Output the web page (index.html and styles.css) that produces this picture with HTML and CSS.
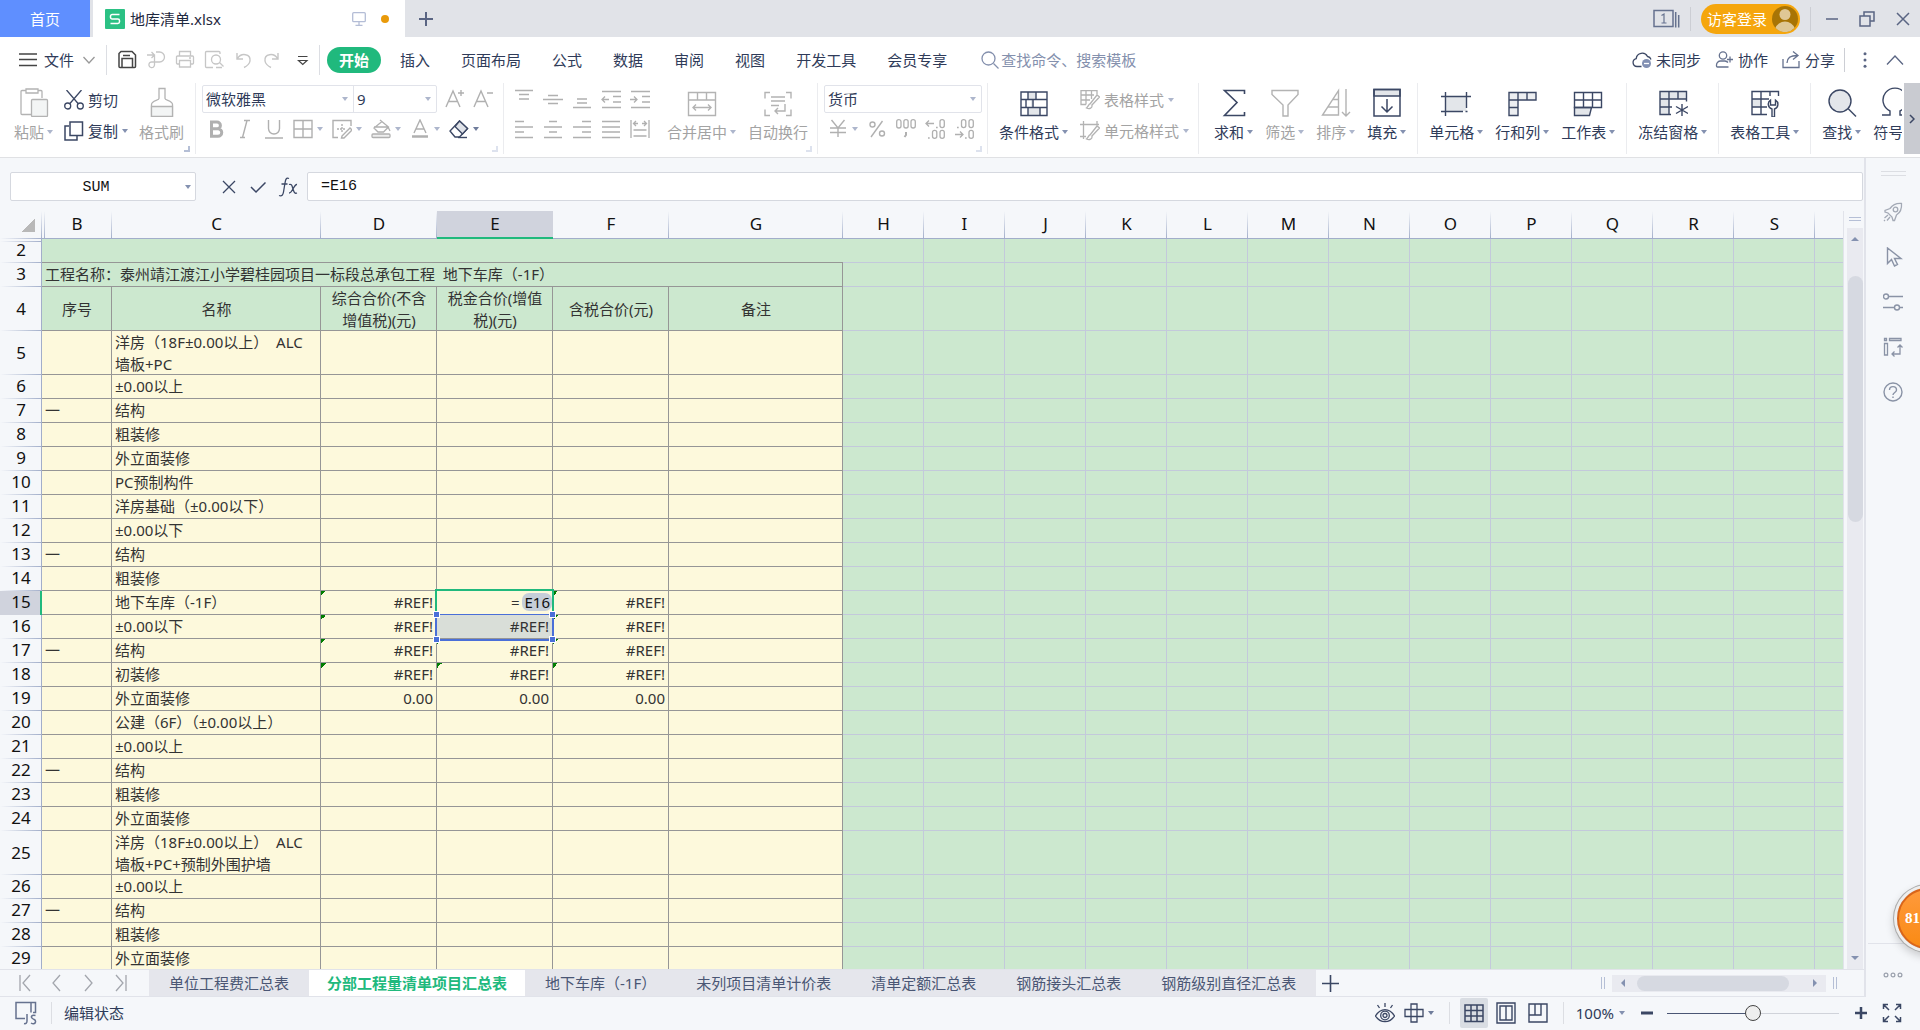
FILE: index.html
```html
<!DOCTYPE html>
<html lang="zh-CN">
<head>
<meta charset="utf-8">
<title>地库清单.xlsx</title>
<link rel="stylesheet" href="styles.css">
</head>
<body>
<header class="titlebar">
  <button class="home-tab">首页</button>
  <div class="doc-tab">
    <svg class="doc-logo" width="20" height="20" viewBox="0 0 20 20"><rect width="20" height="20" rx="1" fill="#2bc184"/><path d="M14.5 5.5H7.2a1.7 1.7 0 0 0-1.7 1.7v1.1A1.7 1.7 0 0 0 7.200 10h5.600a1.700 1.700 0 0 1 1.700 1.700v1.100a1.700 1.700 0 0 1-1.700 1.700H5.500" fill="none" stroke="#fff" stroke-width="1.500"/></svg>
    <span class="doc-name">地库清单.xlsx</span>
    <svg width="14" height="14" viewBox="0 0 14 14" fill="none" stroke="#b4bdd6" stroke-width="1.300"><rect x=".7" y=".7" width="12.600" height="9" rx="1"/><path d="M7 9.500v4M3.500 13.300h7"/></svg>
    <span class="unsaved"></span>
  </div>
  <button class="icon-btn new-tab" aria-label="新建"><svg width="16" height="16" viewBox="0 0 16 16" stroke="#5a6583" stroke-width="2"><path d="M8 1v14M1 8h14"/></svg></button>
  <div class="window-tools">
    <button class="icon-btn" aria-label="窗口"><svg width="27" height="20" viewBox="0 0 27 20" fill="none" stroke="#66728f" stroke-width="1.500"><rect x="1" y="1.500" width="19" height="16"/><path d="M8.500 6.500l2.500-1.500v9M8.500 14h5" stroke-width="1.200"/><path d="M22.700 3v15.500M25.700 6v12.500"/></svg></button>
    <i class="rule"></i>
    <button class="login">访客登录<svg width="26" height="26" viewBox="0 0 26 26"><circle cx="13" cy="13" r="13" fill="#a87405"/><circle cx="13" cy="8.500" r="5.500" fill="#dfc795"/><path d="M3.500 22a9.800 8.500 0 0 1 19 0A13 13 0 0 1 3.500 22z" fill="#dfc795"/></svg></button>
    <i class="rule"></i>
    <button class="icon-btn min" aria-label="最小化"><svg width="14" height="14" viewBox="0 0 14 14"><path d="M1 7h12" stroke="#5a6583" stroke-width="1.500"/></svg></button>
    <button class="icon-btn restore" aria-label="还原"><svg width="16" height="16" viewBox="0 0 16 16" fill="none" stroke="#5a6583" stroke-width="1.500"><rect x="1" y="5" width="10" height="10"/><path d="M5 5V1h10v9h-4"/></svg></button>
    <button class="icon-btn close" aria-label="关闭"><svg width="14" height="14" viewBox="0 0 14 14" stroke="#5a6583" stroke-width="1.500"><path d="M1 1l12 12M13 1L1 13"/></svg></button>
  </div>
</header>

<nav class="menubar">
  <button class="file-btn"><svg width="18" height="14" viewBox="0 0 18 14" stroke="#444" stroke-width="1.500"><path d="M0 1h18M0 6.500h18M0 12.500h18"/></svg><span>文件</span><svg width="12" height="8" viewBox="0 0 12 8" fill="none" stroke="#999" stroke-width="1.300"><path d="M.5 1L6 7l5.500-6"/></svg></button>
  <i class="rule tall"></i>
  <div class="quick">
    <button class="icon-btn" aria-label="保存"><svg width="20" height="20" viewBox="0 0 20 20" fill="none" stroke="#444" stroke-width="1.500"><path d="M2 16.500V3.500L4 1.500h11L18.500 5v11.500a1 1 0 0 1-1 1H3a1 1 0 0 1-1-1zM5 17V8.500h10.500V17M6 5.500h7"/></svg></button>
    <button class="icon-btn" aria-label="输出"><svg width="20" height="20" viewBox="0 0 20 20" fill="none" stroke="#c6c6c6" stroke-width="1.300"><path d="M1 5h7M5.500 2l3 3-3 3M10 2h3.500a5 5 0 0 1 0 10H6a2.800 2.800 0 1 0 2.500 3V5"/></svg></button>
    <button class="icon-btn" aria-label="打印"><svg width="20" height="20" viewBox="0 0 20 20" fill="none" stroke="#c6c6c6" stroke-width="1.300"><path d="M4.500 6V1.500h11V6M4.500 14H2.500a1 1 0 0 1-1-1V7a1 1 0 0 1 1-1h15a1 1 0 0 1 1 1v6a1 1 0 0 1-1 1h-2M4.500 10.500h11v6.500h-11zM14 8h2"/></svg></button>
    <button class="icon-btn" aria-label="打印预览"><svg width="20" height="20" viewBox="0 0 20 20" fill="none" stroke="#c6c6c6" stroke-width="1.300"><path d="M9 17.500H2.500a1 1 0 0 1-1-1v-14a1 1 0 0 1 1-1H15a1 1 0 0 1 1 1V4"/><circle cx="12" cy="9.500" r="4.500"/><path d="M15.500 12.500l4 4M12 17.500h6"/></svg></button>
    <button class="icon-btn" aria-label="撤销"><svg width="20" height="20" viewBox="0 0 20 20" fill="none" stroke="#c6c6c6" stroke-width="1.400"><path d="M4 3v6h6M4.500 8.500C8 2.500 18 3.500 17 11c-.5 3-3 5-6 6.500"/></svg></button>
    <button class="icon-btn" aria-label="恢复"><svg width="20" height="20" viewBox="0 0 20 20" fill="none" stroke="#c6c6c6" stroke-width="1.400"><path d="M16 3v6h-6M15.500 8.500C12 2.500 2 3.500 3 11c.5 3 3 5 6 6.500"/></svg></button>
    <button class="icon-btn more" aria-label="更多"><svg width="20" height="20" viewBox="0 0 20 20" fill="none" stroke="#444" stroke-width="1.200"><path d="M5 6.500h9.500M5.500 10.500h8.500l-4.250 4z"/></svg></button>
  </div>
  <i class="rule tall"></i>
  <div class="menu-tabs">
    <button class="active">开始</button><button>插入</button><button>页面布局</button><button>公式</button><button>数据</button><button>审阅</button><button>视图</button><button>开发工具</button><button>会员专享</button>
  </div>
  <label class="search"><svg width="18" height="18" viewBox="0 0 18 18" fill="none" stroke="#8490ad" stroke-width="1.300"><circle cx="7.500" cy="7.500" r="6.500"/><path d="M12.500 12.500l5 5"/></svg><input type="text" placeholder="查找命令、搜索模板" aria-label="搜索"></label>
  <div class="menu-right">
    <button><svg width="20" height="20" viewBox="0 0 20 20" fill="none" stroke="#3b4764" stroke-width="1.300"><path d="M9.500 16.500H5a4 4 0 0 1-.8-7.900A6 6 0 0 1 15.500 6.500 4.500 4.500 0 0 1 19 9.500"/><circle cx="14.500" cy="13.500" r="4.500" fill="#8290b3" stroke="none"/><path d="M12 13.500h5" stroke="#fff"/></svg>未同步</button>
    <button><svg width="20" height="20" viewBox="0 0 20 20" fill="none" stroke="#66728f" stroke-width="1.300"><circle cx="9" cy="5.500" r="3.700"/><path d="M14 12.500a5 4 0 0 0-3-1.500H6.500a4 4 0 0 0-4 4v1a1 1 0 0 0 1 1h11M13 9.500h6M16 6.500v6"/></svg>协作</button>
    <button><svg width="20" height="20" viewBox="0 0 20 20" fill="none" stroke="#66728f" stroke-width="1.300"><path d="M2 9v8.500h16V11M6 13c0-5 3-7.500 10.500-7.500M12 1.500l5 4-5 4"/></svg>分享</button>
    <i class="rule"></i>
    <button class="icon-btn dots" aria-label="更多"><svg width="4" height="16" viewBox="0 0 4 16" fill="#5a6583"><circle cx="2" cy="1.700" r="1.500"/><circle cx="2" cy="8" r="1.500"/><circle cx="2" cy="14.300" r="1.500"/></svg></button>
    <button class="icon-btn" aria-label="收起功能区"><svg width="18" height="10" viewBox="0 0 18 10" fill="none" stroke="#5a6583" stroke-width="1.300"><path d="M1 9.500L9 1l8 8.500"/></svg></button>
  </div>
</nav>

<section class="ribbon">
  <div class="group g-clip">
    <button class="big off"><svg width="30" height="30" viewBox="0 0 30 30" fill="none" stroke="#b3b3b3" stroke-width="1.300"><path d="M12 27.500H3a1 1 0 0 1-1-1v-22a1 1 0 0 1 1-1h4M19 3.500h3a1 1 0 0 1 1 1V11M7 2h12v4H7z"/><rect x="12.500" y="12.500" width="16" height="17" rx="1" fill="#f3f5f5"/></svg><span>粘贴<b class="caret"></b></span></button>
    <div class="stack">
      <button class="small"><svg width="20" height="20" viewBox="0 0 20 20" fill="none" stroke="#3b4764" stroke-width="1.300"><path d="M2.500 0l12 14M17.500 0l-12 14"/><circle cx="3.700" cy="16" r="3"/><circle cx="16.300" cy="16" r="3"/></svg>剪切</button>
      <button class="small"><svg width="20" height="20" viewBox="0 0 20 20" fill="none" stroke="#3b4764" stroke-width="1.500"><path d="M5 5H1v14h12v-4"/><rect x="6" y="1" width="12.500" height="13.500"/></svg>复制<b class="caret"></b></button>
    </div>
    <button class="big off"><svg width="30" height="30" viewBox="0 0 30 30" fill="none" stroke="#b3b3b3" stroke-width="1.300"><path d="M12 1.500h6v10c0 2 7.500 2 7.500 6v12h-21v-12c0-4 7.500-4 7.500-6z"/><path d="M4.500 19.500h21v10h-21z" fill="#f3f5f5"/></svg><span>格式刷</span></button>
    <i class="corner dark"></i>
  </div>

  <div class="group g-font">
    <div class="rows">
      <div class="row">
        <div class="combo pair"><span class="sel font-name"><select aria-label="字体"><option>微软雅黑</option></select><b class="caret"></b></span><span class="sel font-size"><select aria-label="字号"><option>9</option></select><b class="caret"></b></span></div>
        <button class="icon-btn" aria-label="增大字号"><svg width="20" height="20" viewBox="0 0 20 20" fill="none" stroke="#b0b0b0" stroke-width="1.400"><path d="M1 18L8 2l7 16M3.500 12.500h9M13 4h6M16 1v6"/></svg></button>
        <button class="icon-btn" aria-label="减小字号"><svg width="20" height="20" viewBox="0 0 20 20" fill="none" stroke="#b0b0b0" stroke-width="1.400"><path d="M1 18L8 2l7 16M3.500 12.500h9M14 4h6"/></svg></button>
      </div>
      <div class="row tools">
        <button class="icon-btn" aria-label="加粗"><svg width="20" height="20" viewBox="0 0 20 20" fill="none" stroke="#b0b0b0" stroke-width="3"><path d="M5.500 3H11a3.300 3.300 0 0 1 0 6.800H5.500zM5.500 9.800H12a3.700 3.700 0 0 1 0 7.500H5.500z"/></svg></button>
        <button class="icon-btn" aria-label="倾斜"><svg width="20" height="20" viewBox="0 0 20 20" fill="none" stroke="#b0b0b0" stroke-width="1.400"><path d="M9 1.500h6M5 18.500h5M12 1.500l-4.500 17"/></svg></button>
        <button class="icon-btn" aria-label="下划线"><svg width="20" height="20" viewBox="0 0 20 20" fill="none" stroke="#b0b0b0" stroke-width="1.400"><path d="M4.500 1v8.500a5.500 5.500 0 0 0 11 0V1M1 19h18"/></svg></button>
        <button class="icon-btn drop" aria-label="边框"><svg width="20" height="20" viewBox="0 0 20 20" fill="none" stroke="#b0b0b0" stroke-width="1.400"><path d="M1 1.500h18v17H1zM10 1.500v17M1 10h18"/></svg><b class="caret"></b></button>
        <button class="icon-btn drop" aria-label="绘制边框"><svg width="20" height="20" viewBox="0 0 20 20" fill="none" stroke="#b0b0b0" stroke-width="1.400"><path d="M6 18.500H1v-17h18V7M10 17l8-8 2 2-8 8H9.500z"/><path d="M5 10h9M10 5v8" stroke-dasharray="2 1"/></svg><b class="caret"></b></button>
        <button class="icon-btn drop" aria-label="填充颜色"><svg width="20" height="20" viewBox="0 0 20 20" fill="none" stroke="#b0b0b0" stroke-width="1.300"><path d="M9 1l8.500 7-5 5H7L3 9l8-6.500M3 8h14l2 4"/><rect x="1" y="15" width="18" height="3.500" rx="1" fill="#eee"/></svg><b class="caret"></b></button>
        <button class="icon-btn drop" aria-label="字体颜色"><svg width="20" height="20" viewBox="0 0 20 20" fill="none" stroke="#b0b0b0" stroke-width="1.400"><path d="M4 14L10 1l6 13M6 10h8"/><path d="M2 17.500h16" stroke-width="2.500"/></svg><b class="caret"></b></button>
        <button class="icon-btn drop strong" aria-label="清除"><svg width="20" height="20" viewBox="0 0 20 20" fill="none" stroke="#3b4764" stroke-width="1.400"><path d="M10.500 2l8 7.500-8 8.500H6L1 12z"/><path d="M10.500 2l8 7.500-5 5.500-7.500-7.500z" fill="#dfe2e8"/><path d="M9 18.500h9"/></svg><b class="caret"></b></button>
      </div>
    </div>
    <i class="corner"></i>
  </div>

  <div class="group g-align">
    <div class="rows">
      <div class="row tools">
        <button class="icon-btn" aria-label="顶端对齐"><svg width="20" height="20" viewBox="0 0 20 20" stroke="#b0b0b0" stroke-width="1.300"><path d="M1 1.500h18M5 5.500h10M5 10h10"/></svg></button>
        <button class="icon-btn" aria-label="垂直居中"><svg width="20" height="20" viewBox="0 0 20 20" stroke="#b0b0b0" stroke-width="1.300"><path d="M5 6.500h10M0 10.500h20M5 14.500h10"/></svg></button>
        <button class="icon-btn" aria-label="底端对齐"><svg width="20" height="20" viewBox="0 0 20 20" stroke="#b0b0b0" stroke-width="1.300"><path d="M5 10h10M5 14h10M1 18.500h18"/></svg></button>
        <button class="icon-btn" aria-label="减少缩进"><svg width="20" height="20" viewBox="0 0 20 20" fill="none" stroke="#b0b0b0" stroke-width="1.300"><path d="M1 2.500h19M12 7.500h8M12 13h8M1 18.500h19M1 10.500h7M4 7.500l-3 3 3 3"/></svg></button>
        <button class="icon-btn" aria-label="增加缩进"><svg width="20" height="20" viewBox="0 0 20 20" fill="none" stroke="#b0b0b0" stroke-width="1.300"><path d="M1 2.500h19M12 7.500h8M12 13h8M1 18.500h19M0 10.500h7M4 7.500l3 3-3 3"/></svg></button>
      </div>
      <div class="row tools">
        <button class="icon-btn" aria-label="左对齐"><svg width="20" height="20" viewBox="0 0 20 20" stroke="#b0b0b0" stroke-width="1.300"><path d="M1 2.500h9M1 8h18M1 13h9M1 18.500h18"/></svg></button>
        <button class="icon-btn" aria-label="水平居中"><svg width="20" height="20" viewBox="0 0 20 20" stroke="#b0b0b0" stroke-width="1.300"><path d="M6 2.500h8M1 8h18M6 13h8M1 18.500h18"/></svg></button>
        <button class="icon-btn" aria-label="右对齐"><svg width="20" height="20" viewBox="0 0 20 20" stroke="#b0b0b0" stroke-width="1.300"><path d="M10 2.500h9M1 8h18M10 13h9M1 18.500h18"/></svg></button>
        <button class="icon-btn" aria-label="两端对齐"><svg width="20" height="20" viewBox="0 0 20 20" stroke="#b0b0b0" stroke-width="1.300"><path d="M1 2.500h18M1 8h18M1 13h18M1 18.500h18"/></svg></button>
        <button class="icon-btn" aria-label="分散对齐"><svg width="20" height="20" viewBox="0 0 20 20" fill="none" stroke="#b0b0b0" stroke-width="1.300"><path d="M1 1v18M19 1v18M4 4.500h4M12 4.500h4M6 2L3.500 4.500 6 7M14 2l2.500 2.500L14 7M3.500 11h13M3.500 17h13"/></svg></button>
      </div>
    </div>
    <button class="big off merge"><svg width="30" height="30" viewBox="0 0 30 30" fill="none" stroke="#b3b3b3" stroke-width="1.400"><path d="M1.500 5.500h27v23h-27zM1.500 13h27M10.500 5.500V13M19.500 5.500V13M6 20.500h18M9 17.500l-3 3 3 3M21 17.500l3 3-3 3"/></svg><span>合并居中<b class="caret"></b></span></button>
    <button class="big off"><svg width="30" height="30" viewBox="0 0 30 30" fill="none" stroke="#b3b3b3" stroke-width="1.400"><path d="M7 5.500H2v6M23 5.500h5v6M7 28.500H2v-6M23 28.500h5v-6M8 10h14M8 14h14M8 18.500h8M22 17v7H12M15 21l-3 3 3 3"/></svg><span>自动换行</span></button>
    <i class="corner"></i>
  </div>

  <div class="group g-num">
    <div class="rows">
      <div class="row"><div class="combo"><span class="sel num-format"><select aria-label="数字格式"><option>货币</option></select><b class="caret"></b></span></div></div>
      <div class="row tools">
        <button class="icon-btn drop" aria-label="货币"><svg width="20" height="20" viewBox="0 0 20 20" fill="none" stroke="#b0b0b0" stroke-width="1.400"><path d="M3.500 1l6.500 8 6.500-8M10 9v9M2 9h16M2 13.500h16"/></svg><b class="caret"></b></button>
        <button class="icon-btn" aria-label="百分比"><svg width="20" height="20" viewBox="0 0 20 20" fill="none" stroke="#b0b0b0" stroke-width="1.400"><circle cx="5.500" cy="5.500" r="2.500"/><circle cx="15" cy="14.500" r="2.500"/><path d="M15.500 2L4 18"/></svg></button>
        <button class="icon-btn" aria-label="千位分隔"><svg width="20" height="20" viewBox="0 0 20 20" fill="none" stroke="#b0b0b0" stroke-width="1.300"><rect x=".7" y=".7" width="4.300" height="8.300" rx="2.100"/><rect x="7.850" y=".7" width="4.300" height="8.300" rx="2.100"/><rect x="15" y=".7" width="4.300" height="8.300" rx="2.100"/><path d="M10 13v3l-1.500 2" stroke-width="2"/></svg></button>
        <button class="icon-btn" aria-label="增加小数位"><svg width="20" height="20" viewBox="0 0 20 20" fill="none" stroke="#b0b0b0" stroke-width="1.300"><path d="M1 4.500h8M4 1.500l-3 3 3 3M11 8.500h1.700M3 19h1.700"/><rect x="15" y=".7" width="4.300" height="8" rx="2.100"/><rect x="7.500" y="11.300" width="4.300" height="8" rx="2.100"/><rect x="15" y="11.300" width="4.300" height="8" rx="2.100"/></svg></button>
        <button class="icon-btn" aria-label="减少小数位"><svg width="20" height="20" viewBox="0 0 20 20" fill="none" stroke="#b0b0b0" stroke-width="1.300"><path d="M1 15.500h8M6 12.500l3 3-3 3M11 19h1.700M3 8.500h1.700"/><rect x="15" y=".7" width="4.300" height="8" rx="2.100"/><rect x="7.500" y=".7" width="4.300" height="8" rx="2.100"/><rect x="15" y="11.300" width="4.300" height="8" rx="2.100"/></svg></button>
      </div>
    </div>
    <i class="corner"></i>
  </div>

  <div class="group g-style">
    <button class="big"><svg width="30" height="30" viewBox="0 0 30 30" fill="none" stroke="#3b4764" stroke-width="1.400"><path d="M9 5h8v8H9zM12 13h3v8h-3zM9 21h12v7H9z" fill="#e3e6ea" stroke="none"/><path d="M2 5h26v23.500H2zM2 12.500h26M2 20.500h26M9 5v7.500M17 5v7.500M7 12.500v8M14 12.500v8M9 20.500v8M21 20.500v8"/></svg><span>条件格式<b class="caret"></b></span></button>
    <div class="stack">
      <button class="small off"><svg width="20" height="20" viewBox="0 0 20 20" fill="none" stroke="#b3b3b3" stroke-width="1.300"><path d="M6 14.500H1v-14h16V5M1 5h13M1 10h9M6 .5v14M11.500.5V9M10 14l7-9 2.500 2-8 8.500M10.500 13.500c-2 .5-2 3-4 4.500 3 1.500 6 0 5.500-3"/></svg>表格样式<b class="caret"></b></button>
      <button class="small off"><svg width="20" height="20" viewBox="0 0 20 20" fill="none" stroke="#b3b3b3" stroke-width="1.300"><path d="M0 3.500h19M3.500 0v18M17 0v4M0 15.500h6M10 14l7-9 2.500 2-8 8.500M10.500 13.500c-2 .5-2 3-4 4.500 3 1.500 6 0 5.500-3"/></svg>单元格样式<b class="caret"></b></button>
    </div>
  </div>

  <div class="group g-edit">
    <button class="big"><svg width="30" height="30" viewBox="0 0 30 30" fill="none" stroke="#3b4764" stroke-width="1.600"><path d="M25.500 7V3.500h-20L18 15.500 5.500 28.500h20V25"/></svg><span>求和<b class="caret"></b></span></button>
    <button class="big off"><svg width="30" height="30" viewBox="0 0 30 30" fill="none" stroke="#b3b3b3" stroke-width="1.400"><path d="M2 3.500h26v4L18 18v11h-5V18L2 7.500z"/></svg><span>筛选<b class="caret"></b></span></button>
    <button class="big off"><svg width="30" height="30" viewBox="0 0 30 30" fill="none" stroke="#b3b3b3" stroke-width="1.400"><path d="M17.500 28V3.500L1.500 28zM12 12.500h5.500M7 20h10.500M25 2v27M21 25l4 4 4-4"/></svg><span>排序<b class="caret"></b></span></button>
    <button class="big"><svg width="30" height="30" viewBox="0 0 30 30" fill="none" stroke="#3b4764" stroke-width="1.500"><path d="M2 2.500h26V9H2z" fill="#e3e6ea"/><path d="M2 2.500h26v26.500H2zM15 12v13M9.500 19.500L15 25l5.500-5.500"/></svg><span>填充<b class="caret"></b></span></button>
  </div>

  <div class="group g-cell">
    <button class="big"><svg width="30" height="30" viewBox="0 0 30 30" fill="none" stroke="#3b4764" stroke-width="1.400"><path d="M4.500 9.500h21V24h-21z" fill="#e3e6ea" stroke="none"/><path d="M0 9.500h30M4.500 5v24M25.500 5v16M0 24.500h22M24.500 24.500h2"/></svg><span>单元格<b class="caret"></b></span></button>
    <button class="big"><svg width="30" height="30" viewBox="0 0 30 30" fill="none" stroke="#3b4764" stroke-width="1.400"><path d="M2 5.500h27V13H11v15.500H2z" fill="#eceef1"/><path d="M11 5.500V13H2M20 5.500V13M2 20.500h9"/></svg><span>行和列<b class="caret"></b></span></button>
    <button class="big"><svg width="30" height="30" viewBox="0 0 30 30" fill="none" stroke="#3b4764" stroke-width="1.400"><path d="M1.500 20.500h17l-2 8h-15z" fill="#e3e6ea"/><path d="M1.500 5.500h27v15h-27zM1.500 13h27M10.500 5.500v15M19.500 5.500v15"/></svg><span>工作表<b class="caret"></b></span></button>
  </div>

  <div class="group g-one">
    <button class="big"><svg width="30" height="30" viewBox="0 0 30 30" fill="none" stroke="#3b4764" stroke-width="1.400"><path d="M2 4.500h26.500V12H11v15.500H2z" fill="#e3e6ea" stroke="none"/><path d="M13 27.500H2v-23h26.500v10M2 12h26.500M2 20h12M11 4.500v23M20 4.500V12M24 17v12M18 19.500l12 7M30 19.500l-12 7"/></svg><span>冻结窗格<b class="caret"></b></span></button>
  </div>
  <div class="group g-one">
    <button class="big"><svg width="30" height="30" viewBox="0 0 30 30" fill="none" stroke="#3b4764" stroke-width="1.400"><path d="M2 12h9v8H2z" fill="#e3e6ea" stroke="none"/><path d="M17 27.500H2v-23h26.500V9M2 12h17M2 20h15M11 4.500v23M20 4.500V9M22 30v-8a5 5 0 0 1-1.500-9v5h5v-5a5 5 0 0 1-1 9v8z"/></svg><span>表格工具<b class="caret"></b></span></button>
  </div>
  <div class="group g-find">
    <button class="big"><svg width="30" height="30" viewBox="0 0 30 30" fill="none" stroke="#3b4764" stroke-width="1.400"><circle cx="13" cy="14" r="11" fill="#e3e6ea"/><path d="M21 21.500l8 8"/></svg><span>查找<b class="caret"></b></span></button>
    <button class="big"><svg width="30" height="30" viewBox="0 0 30 30" fill="none" stroke="#3b4764" stroke-width="1.400"><path d="M4 28h8v-4A12 12 0 1 1 22 24v4h8"/></svg><span>符号<b class="caret"></b></span></button>
  </div>
  <button class="ribbon-more" aria-label="更多功能"><svg width="6" height="10" viewBox="0 0 6 10" fill="none" stroke="#3b4764" stroke-width="1.500"><path d="M1 1l4 4-4 4"/></svg></button>
</section>

<div class="workspace">
  <main class="book">
    <div class="formula-bar">
      <span class="sel name-box"><input type="text" value="SUM" aria-label="名称框"><b class="caret"></b></span>
      <div class="formula-tools">
        <button class="icon-btn" aria-label="取消"><svg width="16" height="16" viewBox="0 0 16 16" stroke="#3b4764" stroke-width="1.300"><path d="M2 2l12 12M14 2L2 14"/></svg></button>
        <button class="icon-btn" aria-label="输入"><svg width="16" height="16" viewBox="0 0 16 16" fill="none" stroke="#3b4764" stroke-width="1.500"><path d="M1 8l5 5 9.500-9.500"/></svg></button>
        <button class="icon-btn" aria-label="插入函数"><svg width="20" height="20" viewBox="0 0 20 20" fill="none" stroke="#3b4764" stroke-width="1.300"><path d="M11 1.500C8 0 7.500 3 7 6L5.500 15c-.5 3-1.500 4.500-4.500 3.500M3.500 7h6M11 7.500c3-1 3 1.500 4 4.500s1.500 5 4 4M19 7.500c-3-.5-4.500 8.500-8 8.500"/></svg></button>
      </div>
      <input class="formula" type="text" value="=E16" aria-label="编辑栏">
    </div>

    <div class="sheet-row">
      <div class="sheet">
        <table class="grid">
          <colgroup><col class="c-head"><col class="c-b"><col class="c-c"><col class="c-d"><col class="c-d"><col class="c-d"><col class="c-g"><col class="c-h" span="12"><col></colgroup>
          <thead><tr><th class="all"></th><th class="after-hidden">B</th><th>C</th><th>D</th><th class="current">E</th><th>F</th><th>G</th><th>H</th><th>I</th><th>J</th><th>K</th><th>L</th><th>M</th><th>N</th><th>O</th><th>P</th><th>Q</th><th>R</th><th>S</th><th class="last"></th></tr></thead>
          <tbody>
          <tr class="top"><th class="after-hidden">2</th><td colspan="6"></td><td class="void" colspan="13"></td></tr>
          <tr class="cap"><th>3</th><td colspan="6">工程名称：泰州靖江渡江小学碧桂园项目一标段总承包工程&nbsp; 地下车库（-1F）</td><td class="void" colspan="13"></td></tr>
          <tr class="cap tall-row mid"><th>4</th><td>序号</td><td>名称</td><td>综合合价(不含<br>增值税)(元)</td><td>税金合价(增值<br>税)(元)</td><td>含税合价(元)</td><td>备注</td><td class="void" colspan="13"></td></tr>
          <tr class="tall-row"><th>5</th><td></td><td>洋房（18F±0.00以上）&nbsp; ALC<br>墙板+PC</td><td></td><td></td><td></td><td></td><td class="void" colspan="13"></td></tr>
          <tr><th>6</th><td></td><td>±0.00以上</td><td></td><td></td><td></td><td></td><td class="void" colspan="13"></td></tr>
          <tr><th>7</th><td>一</td><td>结构</td><td></td><td></td><td></td><td></td><td class="void" colspan="13"></td></tr>
          <tr><th>8</th><td></td><td>粗装修</td><td></td><td></td><td></td><td></td><td class="void" colspan="13"></td></tr>
          <tr><th>9</th><td></td><td>外立面装修</td><td></td><td></td><td></td><td></td><td class="void" colspan="13"></td></tr>
          <tr><th>10</th><td></td><td>PC预制构件</td><td></td><td></td><td></td><td></td><td class="void" colspan="13"></td></tr>
          <tr><th>11</th><td></td><td>洋房基础（±0.00以下）</td><td></td><td></td><td></td><td></td><td class="void" colspan="13"></td></tr>
          <tr><th>12</th><td></td><td>±0.00以下</td><td></td><td></td><td></td><td></td><td class="void" colspan="13"></td></tr>
          <tr><th>13</th><td>一</td><td>结构</td><td></td><td></td><td></td><td></td><td class="void" colspan="13"></td></tr>
          <tr><th>14</th><td></td><td>粗装修</td><td></td><td></td><td></td><td></td><td class="void" colspan="13"></td></tr>
          <tr><th class="current">15</th><td></td><td>地下车库（-1F）</td><td class="num err">#REF!</td><td class="num editing">=<span class="ref">E16</span><i class="frame"></i></td><td class="num err">#REF!</td><td></td><td class="void" colspan="13"></td></tr>
          <tr><th>16</th><td></td><td>±0.00以下</td><td class="num err">#REF!</td><td class="num picked">#REF!<i class="frame"><i></i><i></i><i></i><i></i></i></td><td class="num err">#REF!</td><td></td><td class="void" colspan="13"></td></tr>
          <tr><th>17</th><td>一</td><td>结构</td><td class="num err">#REF!</td><td class="num err">#REF!</td><td class="num err">#REF!</td><td></td><td class="void" colspan="13"></td></tr>
          <tr><th>18</th><td></td><td>初装修</td><td class="num err">#REF!</td><td class="num err">#REF!</td><td class="num err">#REF!</td><td></td><td class="void" colspan="13"></td></tr>
          <tr><th>19</th><td></td><td>外立面装修</td><td class="num">0.00</td><td class="num">0.00</td><td class="num">0.00</td><td></td><td class="void" colspan="13"></td></tr>
          <tr><th>20</th><td></td><td>公建（6F）（±0.00以上）</td><td></td><td></td><td></td><td></td><td class="void" colspan="13"></td></tr>
          <tr><th>21</th><td></td><td>±0.00以上</td><td></td><td></td><td></td><td></td><td class="void" colspan="13"></td></tr>
          <tr><th>22</th><td>一</td><td>结构</td><td></td><td></td><td></td><td></td><td class="void" colspan="13"></td></tr>
          <tr><th>23</th><td></td><td>粗装修</td><td></td><td></td><td></td><td></td><td class="void" colspan="13"></td></tr>
          <tr><th>24</th><td></td><td>外立面装修</td><td></td><td></td><td></td><td></td><td class="void" colspan="13"></td></tr>
          <tr class="tall-row"><th>25</th><td></td><td>洋房（18F±0.00以上）&nbsp; ALC<br>墙板+PC+预制外围护墙</td><td></td><td></td><td></td><td></td><td class="void" colspan="13"></td></tr>
          <tr><th>26</th><td></td><td>±0.00以上</td><td></td><td></td><td></td><td></td><td class="void" colspan="13"></td></tr>
          <tr><th>27</th><td>一</td><td>结构</td><td></td><td></td><td></td><td></td><td class="void" colspan="13"></td></tr>
          <tr><th>28</th><td></td><td>粗装修</td><td></td><td></td><td></td><td></td><td class="void" colspan="13"></td></tr>
          <tr><th>29</th><td></td><td>外立面装修</td><td></td><td></td><td></td><td></td><td class="void" colspan="13"></td></tr>
          </tbody>
        </table>
      </div>
      <div class="vscroll">
        <i class="split"></i>
        <div class="vtrack"><b class="tri up"></b><span class="vthumb"></span><b class="tri down"></b></div>
      </div>
    </div>

    <div class="sheet-tabs">
      <div class="sheet-nav">
        <button class="icon-btn" aria-label="首个"><svg width="12" height="18" viewBox="0 0 12 18" fill="none" stroke="#a3a6ad" stroke-width="1.300"><path d="M1 1v16M11 1L4 9l7 8"/></svg></button>
        <button class="icon-btn" aria-label="上一个"><svg width="12" height="18" viewBox="0 0 12 18" fill="none" stroke="#a3a6ad" stroke-width="1.300"><path d="M9 1L2 9l7 8"/></svg></button>
        <button class="icon-btn" aria-label="下一个"><svg width="12" height="18" viewBox="0 0 12 18" fill="none" stroke="#a3a6ad" stroke-width="1.300"><path d="M2 1l7 8-7 8"/></svg></button>
        <button class="icon-btn" aria-label="末个"><svg width="12" height="18" viewBox="0 0 12 18" fill="none" stroke="#a3a6ad" stroke-width="1.300"><path d="M11 1v16M1 1l7 8-7 8"/></svg></button>
      </div>
      <div class="tabs"><button>单位工程费汇总表</button><button class="active">分部工程量清单项目汇总表</button><button>地下车库（-1F）</button><button>未列项目清单计价表</button><button>清单定额汇总表</button><button>钢筋接头汇总表</button><button>钢筋级别直径汇总表</button></div>
      <button class="icon-btn add" aria-label="新建工作表"><svg width="17" height="17" viewBox="0 0 17 17" stroke="#3b4764" stroke-width="1.600"><path d="M8.500 0v17M0 8.500h17"/></svg></button>
      <div class="hscroll"><i class="grip"></i><div class="htrack"><b class="tri left"></b><span class="hthumb"></span><b class="tri right"></b></div><i class="grip"></i></div>
    </div>
  </main>

  <aside class="side">
    <i class="handle"></i>
    <button class="icon-btn" aria-label="快捷"><svg width="20" height="20" viewBox="0 0 20 20" fill="none" stroke="#a3a9b5" stroke-width="1.300"><path d="M18.500 1.500c-6-.5-9 1.500-11.500 5L2 8.500v1.500l3 1 4 4 1 3.500h1.500L13.500 13c4-2.500 5.500-5.500 5-11.500z"/><circle cx="12.500" cy="7.500" r="2.300"/><path d="M5 13l-3.500 3M7 15l-3 3.500M1 19l1-1"/></svg></button>
    <button class="icon-btn" aria-label="选择"><svg width="20" height="20" viewBox="0 0 20 20" fill="none" stroke="#8a93a6" stroke-width="1.400"><path d="M4.500 1v15.500l4-4 3 6.500 3-1.500-3-6h6.500z"/></svg></button>
    <button class="icon-btn" aria-label="属性"><svg width="20" height="20" viewBox="0 0 20 20" fill="none" stroke="#8a93a6" stroke-width="1.400"><circle cx="3" cy="4.500" r="2.500"/><circle cx="14" cy="15.500" r="2.500"/><path d="M5.500 4.500H20M0 15.500h11.500M16.500 15.500H20"/></svg></button>
    <button class="icon-btn" aria-label="分析"><svg width="20" height="20" viewBox="0 0 20 20" fill="none" stroke="#8a93a6" stroke-width="1.300"><path d="M1.500 1.500h2v2h-2zM6.500 1.500H18v2H6.500zM1.500 6.500h3V18h-3zM17 8v9H9M14.500 10.500L17 8l2.500 2.500M11.500 14.500L9 17l2.500 2.500"/></svg></button>
    <button class="icon-btn" aria-label="帮助"><svg width="20" height="20" viewBox="0 0 20 20" fill="none" stroke="#8a93a6" stroke-width="1.400"><circle cx="10" cy="10" r="9"/><path d="M6.500 8c0-4.500 7-4.500 7 0 0 2.500-3.500 2.500-3.500 5M10 14.500v1.500"/></svg></button>
    <div class="side-foot"><button class="icon-btn" aria-label="更多"><svg width="20" height="6" viewBox="0 0 20 6" fill="none" stroke="#9aa0ac" stroke-width="1.200"><circle cx="3" cy="3" r="1.900"/><circle cx="10" cy="3" r="1.900"/><circle cx="17" cy="3" r="1.900"/></svg></button></div>
  </aside>
</div>

<footer class="status">
  <button class="icon-btn js" aria-label="宏"><svg width="22" height="24" viewBox="0 0 22 24" fill="none" stroke="#66728f" stroke-width="1.500"><path d="M10 17.500H1V1.500h15v10M16 1.500h4.500v10H18M12 13v7c0 2-1 3-3 2.500M20.500 14.500c-4-1-5 1.500-3 3s3.500 1 3 3.500-3 2-4.500 1"/></svg></button>
  <i class="rule"></i>
  <span class="mode">编辑状态</span>
  <div class="status-right">
    <button class="icon-btn" aria-label="护眼模式"><svg width="20" height="20" viewBox="0 0 20 20" fill="none" stroke="#3b4764" stroke-width="1.300"><path d="M.5 13c5-8.500 14-8.500 19 0-5 7.500-14 7.500-19 0zM10 0v4M2.500 2l2 3M17.500 2l-2 3"/><circle cx="10" cy="12.500" r="4.300"/><circle cx="10" cy="12.500" r="2"/></svg></button>
    <button class="icon-btn drop cross strong" aria-label="阅读模式"><svg width="20" height="20" viewBox="0 0 20 20" fill="none" stroke="#3b4764" stroke-width="1.300"><path d="M7 1h6v18H7zM1 6.500h18v7H1z"/></svg><b class="caret"></b></button>
    <i class="rule"></i>
    <div class="views">
      <button class="icon-btn on" aria-label="普通视图"><svg width="20" height="20" viewBox="0 0 20 20" fill="none" stroke="#3b4764" stroke-width="1.500"><path d="M1 2h18v16.500H1zM1 7.500h18M1 13h18M7 2v16.500M13 2v16.500"/></svg></button>
      <button class="icon-btn" aria-label="页面布局"><svg width="20" height="22" viewBox="0 0 20 22" fill="none" stroke="#3b4764" stroke-width="1.400"><path d="M1 1h18v20H1zM4 4h12v14H4zM10 4v14"/></svg></button>
      <button class="icon-btn" aria-label="分页预览"><svg width="20" height="20" viewBox="0 0 20 20" fill="none" stroke="#3b4764" stroke-width="1.400"><path d="M1 1h18v18H1zM7 1v11M1 12h12V1"/></svg></button>
    </div>
    <i class="rule"></i>
    <button class="zoom-pct">100%<b class="caret"></b></button>
    <button class="icon-btn minus" aria-label="缩小"><svg width="14" height="14" viewBox="0 0 14 14" stroke="#3b4764" stroke-width="3"><path d="M1 7h12"/></svg></button>
    <input class="zoom" type="range" min="0" max="200" value="100" aria-label="缩放">
    <button class="icon-btn plus" aria-label="放大"><svg width="14" height="14" viewBox="0 0 14 14" stroke="#3b4764" stroke-width="2.500"><path d="M1 7h12M7 1v12"/></svg></button>
    <button class="icon-btn" aria-label="全屏"><svg width="20" height="20" viewBox="0 0 20 20" fill="none" stroke="#3b4764" stroke-width="1.500"><path d="M1.500 6V1.500H6M1.500 1.500L7 7M14 1.500h4.500V6M18.500 1.500L13 7M1.500 14v4.500H6M1.500 18.500L7 13M14 18.500h4.500V14M18.500 18.500L13 13"/></svg></button>
  </div>
</footer>
<div class="badge">81</div>
</body>
</html>
```
FILE: styles.css
```css
:root {
  --ink: #2f3b59;
  --off: #a3a3a3;
  --panel: #f5f7fa;
  --line: #e1e3ea;
  --green: #cce8cf;
  --cream: #fdf9dc;
  --grid: #969696;
  --faint: #c3c9db;
  --head-line: #a2aeca;
}
* { box-sizing: border-box; }
body {
  margin: 0;
  height: 100vh;
  display: flex;
  flex-direction: column;
  overflow: hidden;
  position: relative;
  background: var(--panel);
  color: var(--ink);
  font: 15px/22px "Noto Sans", "Noto Sans CJK SC", sans-serif;
}
button, input, select { font: inherit; color: inherit; margin: 0; padding: 0; border: 0; background: none; border-radius: 0; outline: 0; }
button { white-space: nowrap; flex: none; }
svg { display: block; flex: none; }
.icon-btn { display: flex; align-items: center; justify-content: center; }
.rule { width: 1px; height: 24px; background: #ccced4; flex: none; }
.caret { width: 0; height: 0; border: 3px solid transparent; border-top: 4px solid #8491b0; border-bottom: 0; flex: none; }

/* title bar */
.titlebar { display: flex; height: 37px; background: #e1e3e8; flex: none; }
.home-tab { width: 90px; background: #5f8fff; color: #fff; margin-right: 3px; }
.doc-tab { width: 312px; background: #fff; display: flex; align-items: center; padding: 0 16px 0 12px; }
.doc-name { margin-left: 5px; flex: 1; color: #1f2940; }
.unsaved { width: 8px; height: 8px; border-radius: 4px; background: #e99a0a; margin-left: 15px; }
.new-tab { width: 42px; }
.window-tools { margin-left: auto; display: flex; align-items: center; padding-right: 10px; }
.window-tools .rule { margin: 0 10px; }
.login { display: flex; align-items: center; gap: 5px; height: 30px; padding: 0 2px 0 6px; border-radius: 15px; background: #f5a60d; color: #fff; }
.min { margin-left: 4px; }
.restore { margin-left: 20px; }
.close { margin-left: 21px; }

/* menu bar */
.menubar { display: flex; align-items: center; height: 45px; background: #fff; flex: none; }
.file-btn { display: flex; align-items: center; padding: 0 11px 0 19px; }
.file-btn span { margin: 0 9px 0 7px; }
.rule.tall { height: 30px; background: #dcdee3; }
.quick { display: flex; gap: 9px; padding: 0 6px 0 10px; }
.quick .more { margin-left: 2px; }
.menu-tabs { display: flex; gap: 7px; margin-left: 7px; }
.menu-tabs button { height: 26px; padding: 0 12px; }
.menu-tabs .active { background: #20b97d; color: #fff; font-weight: 700; border-radius: 13px; }
.search { display: flex; align-items: center; gap: 2px; margin-left: 22px; }
.search input { width: 150px; }
.search input::placeholder { color: #8490ad; opacity: 1; }
.menu-right { display: flex; align-items: center; gap: 13px; margin-left: auto; padding-right: 16px; }
.menu-right button { display: flex; align-items: center; gap: 4px; }
.menu-right .rule { margin: 0 5px 0 -4px; }
.menu-right .dots { margin-right: 6px; }

/* ribbon */
.ribbon { display: flex; height: 76px; padding: 1px 0 3px; background: #fff; border-bottom: 1px solid #e0e1e4; flex: none; overflow: hidden; position: relative; }
.group { display: flex; align-items: flex-start; position: relative; border-right: 1px solid #ebecef; flex: none; gap: 12px; padding: 0 11px; }
.big { display: flex; flex-direction: column; align-items: center; padding-top: 4px; }
.big span { display: flex; align-items: center; gap: 3px; line-height: 30px; }
.small { display: flex; align-items: center; gap: 4px; height: 31px; }
.stack { padding-top: 1px; display: flex; flex-direction: column; align-items: flex-start; }
.off { color: var(--off); }
.off .caret, .drop .caret, .sel .caret { border-top-color: #adb6cc; }
.strong .caret { border-top-color: #6f7c9b; }
.corner { position: absolute; right: 5px; bottom: 2px; width: 6px; height: 6px; border: solid #dde2ee; border-width: 0 2px 2px 0; }
.corner.dark { border-color: #b5bfd6; }
.g-clip { padding-left: 14px; gap: 11px; }
.rows { padding-top: 2px; display: flex; flex-direction: column; gap: 2px; }
.row { display: flex; align-items: center; gap: 8px; height: 28px; }
.row.tools { gap: 9px; }
.drop { gap: 4px; }
.combo { display: flex; border: 1px solid var(--line); border-radius: 2px; height: 28px; }
.sel { display: flex; align-items: center; }
.sel select { appearance: none; flex: 1; min-width: 0; height: 100%; padding-left: 3px; }
.sel .caret { margin-right: 5px; }
.font-name { width: 151px; border-right: 1px solid var(--line); }
.font-size { width: 82px; }
.num-format { width: 156px; }
.g-font { padding: 0 10px 0 6px; }
.g-font .tools, .g-num .tools { padding-left: 4px; }
.g-align { padding: 0 9px 0 10px; }
.merge { margin-left: 5px; }
.g-num { padding: 0 5px 0 6px; }
.g-style { padding-right: 9px; }
.g-edit { padding-left: 15px; }
.g-find { border: 0; padding-right: 0; }
.ribbon-more { position: absolute; right: 0; top: 1px; bottom: 3px; width: 16px; background: #c9cbd1; display: flex; align-items: center; justify-content: center; box-shadow: -2px 0 #fff; }

/* formula bar */
.workspace { display: flex; flex: 1; min-height: 0; }
.book { flex: 1; min-width: 0; display: flex; flex-direction: column; }
.formula-bar { display: flex; padding: 14px 0 10px 10px; flex: none; font: 15px/20px "Liberation Mono", monospace; color: #111; }
.name-box, .formula { height: 29px; background: #fff; border: 1px solid #d5d8df; border-radius: 2px; }
.name-box { width: 186px; }
.name-box input { flex: 1; min-width: 0; text-align: center; padding: 2px 4px 0 0; }
.name-box .caret { margin-right: 4px; border-top-color: #8491b0; }
.formula-tools { display: flex; align-items: center; justify-content: space-between; width: 77px; margin: 0 9px 0 25px; }
.formula { flex: 1; min-width: 0; padding-left: 13px; margin-right: 1px; }

/* grid */
.sheet-row { flex: 1; display: flex; min-height: 0; }
.sheet { flex: 1; min-width: 0; overflow: hidden; }
.grid { width: 100%; table-layout: fixed; border-collapse: separate; border-spacing: 0; color: #333; }
.c-head { width: 42px; }
.c-b { width: 70px; }
.c-c { width: 209px; }
.c-d { width: 116px; }
.c-g { width: 174px; }
.c-h { width: 81px; }
.grid th, .grid td { padding: 0 3px 2px; height: 24px; line-height: 22px; font-weight: 400; text-align: left; white-space: nowrap; }
.grid th { text-align: center; font-size: 17px; color: #111; padding: 0 0 2px; background: var(--panel); }
.grid thead th {
  height: 28px;
  background: linear-gradient(transparent, var(--head-line)) right / 1px 100% no-repeat, linear-gradient(var(--head-line), var(--head-line)) bottom / 100% 1px no-repeat, var(--panel);
}
.grid thead .after-hidden {
  background: linear-gradient(transparent, var(--head-line)) right / 1px 100% no-repeat, linear-gradient(transparent, var(--head-line)) 2px 0 / 1px 100% no-repeat, linear-gradient(var(--head-line), var(--head-line)) bottom / 100% 1px no-repeat, var(--panel);
}
.grid thead .last { background: linear-gradient(var(--head-line), var(--head-line)) bottom / 100% 1px no-repeat; }
.grid thead .all {
  background: linear-gradient(transparent, var(--head-line)) right / 1px 100% no-repeat, linear-gradient(90deg, transparent, var(--head-line)) bottom / 100% 1px no-repeat, linear-gradient(135deg, transparent 50%, #b8b8b8 50%) 22px 8px / 13px 13px no-repeat;
}
.grid thead .current { background: #d0d3dd; box-shadow: inset 0 -2px #20b97d; }
.grid tbody th {
  background: linear-gradient(var(--head-line), var(--head-line)) right / 1px 100% no-repeat, linear-gradient(90deg, transparent, var(--head-line)) bottom / 100% 1px no-repeat;
}
.grid tbody .after-hidden {
  background: linear-gradient(var(--head-line), var(--head-line)) right / 1px 100% no-repeat, linear-gradient(90deg, transparent, var(--head-line)) bottom / 100% 1px no-repeat, linear-gradient(90deg, transparent, var(--head-line)) 0 2px / 100% 1px no-repeat;
}
.grid tbody .current { background: #d0d3dd; box-shadow: inset -2px 0 #20b97d; }
.grid td { background-color: var(--cream); box-shadow: inset -1px -1px var(--grid); }
.grid .cap td { background-color: var(--green); }
.grid .top td { background-color: var(--green); box-shadow: inset 0 -1px var(--grid); }
.grid .tall-row > * { height: 44px; padding-bottom: 0; }
.grid .mid td { text-align: center; }
.grid tbody td.void {
  background: linear-gradient(90deg, transparent 80px, var(--faint) 80px) 0 0 / 81px 100%, var(--green);
  box-shadow: inset 0 -1px var(--faint);
}
.grid td.num { text-align: right; padding-right: 4px; }
.grid td.err { background-image: linear-gradient(to bottom right, #007d00 50%, transparent 50%); background-size: 5px 5px; background-repeat: no-repeat; }
.editing, .picked { position: relative; }
.ref { display: inline-block; height: 18px; line-height: 18px; margin: 0 -3px 0 3px; padding: 0 2px; border-radius: 7px; background: #c5ced9; color: #111; vertical-align: baseline; }
.editing .frame { position: absolute; inset: -2px -1px 0 -2px; border: 2px solid #20b97d; border-bottom: 0; }
.grid td.picked { background: #d9ded8; z-index: 1; }
.picked .frame { position: absolute; inset: -1px -1px -2px -2px; border: 2px solid #4a6fd8; border-top-width: 1px; }
.picked .frame i { position: absolute; width: 7px; height: 7px; background: #4a6fd8; border: solid #fff; border-width: 1px; }
.picked .frame i:nth-child(1) { left: -4px; top: -4px; }
.picked .frame i:nth-child(2) { right: -4px; top: -4px; }
.picked .frame i:nth-child(3) { left: -4px; bottom: -4px; }
.picked .frame i:nth-child(4) { right: -4px; bottom: -4px; }

/* scroll bars */
.vscroll { width: 21px; border-left: 1px solid var(--line); padding: 6px 1px 0 3px; display: flex; flex-direction: column; flex: none; }
.split { height: 4px; margin: 0 2px 7px; border: solid #b5bfd6; border-width: 1px 0; }
.vtrack { flex: 1; background: #e9eaf0; display: flex; flex-direction: column; align-items: center; padding: 9px 0; }
.vthumb { width: 15px; height: 34%; margin-top: 35px; border-radius: 8px; background: #d6d9e1; }
.tri { width: 0; height: 0; border: 4px solid transparent; flex: none; }
.up { border-bottom-color: #8491b0; border-top: 0; }
.down { border-top-color: #8491b0; border-bottom: 0; margin-top: auto; }
.left { border-right-color: #8491b0; border-left: 0; }
.right { border-left-color: #8491b0; border-right: 0; margin-left: auto; }

/* sheet tabs */
.sheet-tabs { display: flex; height: 28px; border: solid var(--line); border-width: 1px 0; flex: none; color: #4a5674; }
.sheet-nav { display: flex; align-items: center; gap: 20px; width: 149px; padding-left: 19px; }
.tabs { display: flex; background: #e5e6ec; }
.tabs button { padding: 0 20px; height: 26px; }
.tabs .active { background: #fff; color: #20b97d; font-weight: 700; padding: 0 18px; }
.add { width: 28px; }
.hscroll { display: flex; align-items: center; gap: 7px; margin-left: auto; padding-right: 27px; }
.grip { width: 4px; height: 12px; border: solid #b5bfd6; border-width: 0 1px; }
.htrack { width: 214px; height: 17px; background: #e9eaf0; display: flex; align-items: center; padding: 0 9px; }
.hthumb { width: 152px; height: 15px; margin-left: 12px; border-radius: 8px; background: #d6d9e1; }

/* side panel */
.side { width: 56px; border-left: 2px solid var(--line); display: flex; flex-direction: column; align-items: center; gap: 25px; padding-top: 13px; flex: none; }
.handle { width: 25px; height: 5px; margin-bottom: 1px; border: solid #dcdee3; border-width: 1px 0; }
.side-foot { margin-top: auto; width: 50px; height: 54px; border-top: 1px solid var(--line); display: flex; justify-content: center; align-items: center; padding-top: 8px; }

/* status bar */
.status { display: flex; align-items: center; height: 33px; flex: none; padding: 0 0 1px 15px; }
.status .rule { height: 22px; background: #dcdee3; }
.js { margin-right: 14px; }
.mode { margin-left: 12px; }
.status-right { margin-left: auto; display: flex; align-items: center; padding-right: 18px; }
.cross { margin: 0 15px 0 9px; }
.views { display: flex; gap: 4px; margin: 0 11px 0 10px; }
.views button { width: 28px; height: 30px; }
.views .on { background: #d9dde3; border-radius: 2px; }
.zoom-pct { display: flex; align-items: center; gap: 5px; margin: 0 15px 0 12px; }
.zoom { appearance: none; width: 172px; height: 20px; margin: 0 15px 0 13px; background: linear-gradient(90deg, #4a5674 50%, #d0d3da 50%) center / 100% 1px no-repeat; }
.zoom::-webkit-slider-thumb { appearance: none; width: 16px; height: 16px; border-radius: 8px; background: #eee; border: 1px solid #444; }
.plus { margin-right: 14px; }

.badge { position: absolute; right: -38px; bottom: 81px; width: 61px; height: 61px; padding-left: 6px; border-radius: 50%; background: linear-gradient(#ff9a3c, #f98a14); border: 2px solid #d9651a; box-shadow: 0 0 0 3px #eee, 0 0 0 4px #aaa, 0 4px 10px 3px #0003; color: #fff; font: bold 15px/56px "Liberation Serif", serif; }
```
